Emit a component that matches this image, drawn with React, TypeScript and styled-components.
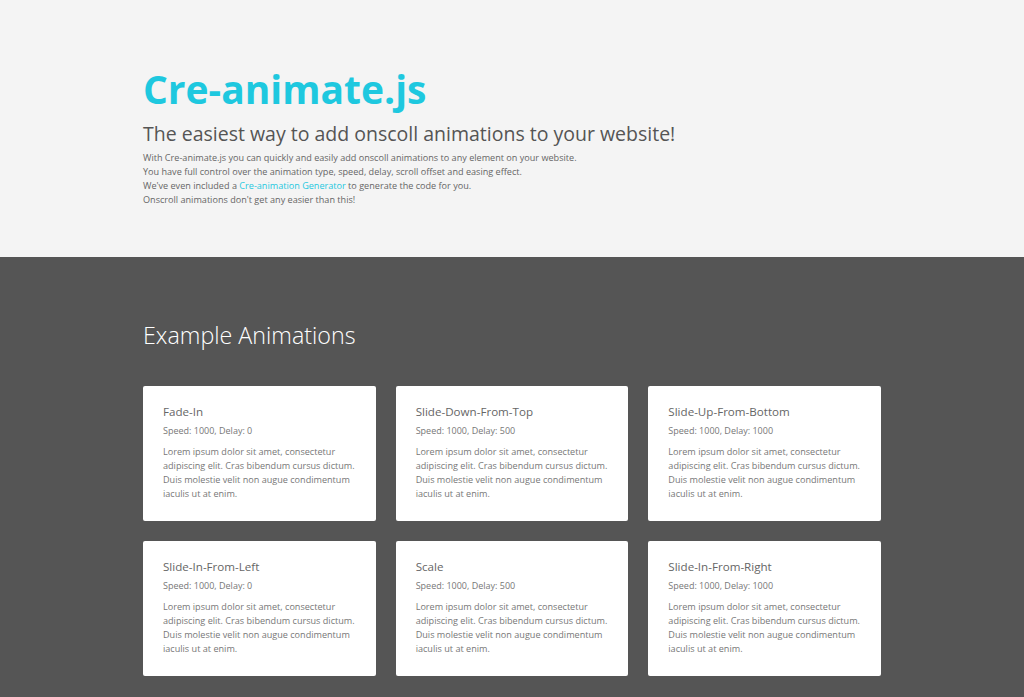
import React from "react";
import styled, { createGlobalStyle } from "styled-components";

const GlobalStyle = createGlobalStyle`
  html, body {
    margin: 0;
    padding: 0;
    background: #555555;
    font-family: "Open Sans", "Noto Sans", sans-serif;
  }
`;

const Hero = styled.header`
  background: #f4f4f4;
  height: 257px;
  box-sizing: border-box;
  padding-top: 62px;
`;

const Container = styled.div`
  width: 738px;
  margin: 0 auto;
`;

const Title = styled.h1`
  margin: 0;
  font-size: 39px;
  line-height: 54px;
  font-weight: 700;
  color: #1ec8df;
`;

const Subtitle = styled.h2`
  margin: 5px 0 4px;
  font-size: 19.5px;
  line-height: 26px;
  font-weight: 400;
  color: #555;
`;

const Intro = styled.p`
  margin: 0;
  font-size: 9.1px;
  line-height: 14px;
  color: #666;
`;

const Link = styled.a`
  color: #1ec8df;
  text-decoration: none;
`;

const Examples = styled.section`
  background: #555555;
  padding: 62px 0 20px;
`;

const SectionTitle = styled.h2`
  margin: 0 0 35px;
  font-size: 23.3px;
  line-height: 32px;
  font-weight: 300;
  color: #fff;
`;

const Grid = styled.div`
  display: grid;
  grid-template-columns: repeat(3, 1fr);
  gap: 20px;
`;

const Card = styled.div`
  background: #fff;
  border-radius: 2px;
  height: 135px;
  box-sizing: border-box;
  padding: 17px 20px;
`;

const CardTitle = styled.h3`
  margin: 0;
  font-size: 11.6px;
  line-height: 18px;
  font-weight: 400;
  color: #666;
`;

const CardMeta = styled.div`
  margin: 3px 0 7px;
  font-size: 9px;
  line-height: 14px;
  color: #777;
`;

const CardText = styled.p`
  margin: 0;
  font-size: 9.1px;
  line-height: 14px;
  color: #777;
`;

const lorem =
  "Lorem ipsum dolor sit amet, consectetur adipiscing elit. Cras bibendum cursus dictum. Duis molestie velit non augue condimentum iaculis ut at enim.";

const animations = [
  { name: "Fade-In", speed: 1000, delay: 0 },
  { name: "Slide-Down-From-Top", speed: 1000, delay: 500 },
  { name: "Slide-Up-From-Bottom", speed: 1000, delay: 1000 },
  { name: "Slide-In-From-Left", speed: 1000, delay: 0 },
  { name: "Scale", speed: 1000, delay: 500 },
  { name: "Slide-In-From-Right", speed: 1000, delay: 1000 },
];

export default function App() {
  return (
    <>
      <GlobalStyle />
      <Hero>
        <Container>
          <Title>Cre-animate.js</Title>
          <Subtitle>The easiest way to add onscoll animations to your website!</Subtitle>
          <Intro>
            With Cre-animate.js you can quickly and easily add onscoll animations to any element on your website.
            <br />
            You have full control over the animation type, speed, delay, scroll offset and easing effect.
            <br />
            We've even included a <Link href="#">Cre-animation Generator</Link> to generate the code for you.
            <br />
            Onscroll animations don't get any easier than this!
          </Intro>
        </Container>
      </Hero>
      <Examples>
        <Container>
          <SectionTitle>Example Animations</SectionTitle>
          <Grid>
            {animations.map((a) => (
              <Card key={a.name}>
                <CardTitle>{a.name}</CardTitle>
                <CardMeta>
                  Speed: {a.speed}, Delay: {a.delay}
                </CardMeta>
                <CardText>{lorem}</CardText>
              </Card>
            ))}
          </Grid>
        </Container>
      </Examples>
    </>
  );
}
